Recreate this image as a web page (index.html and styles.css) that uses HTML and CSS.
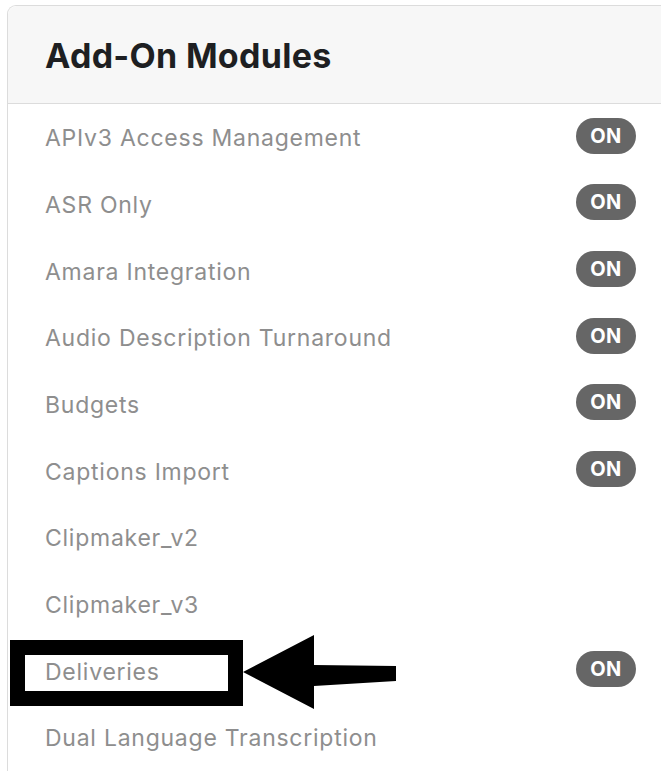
FILE: index.html
```html
<!DOCTYPE html>
<html>
<head>
    <meta charset="utf-8">
    <title>Add-On Modules</title>
    <link rel="stylesheet" href="styles.css">
</head>
<body>
    <div class="card">
        <div class="card-head"><h2>Add-On Modules</h2></div>
        <ul class="modules">
            <li><span>APIv3 Access Management</span><span class="badge">ON</span></li>
            <li><span>ASR Only</span><span class="badge">ON</span></li>
            <li><span>Amara Integration</span><span class="badge">ON</span></li>
            <li><span>Audio Description Turnaround</span><span class="badge">ON</span></li>
            <li><span>Budgets</span><span class="badge">ON</span></li>
            <li><span>Captions Import</span><span class="badge">ON</span></li>
            <li><span>Clipmaker_v2</span></li>
            <li><span>Clipmaker_v3</span></li>
            <li><span>Deliveries</span><span class="badge">ON</span></li>
            <li><span>Dual Language Transcription</span></li>
        </ul>
    </div>
    <div class="mark-box"></div>
    <svg class="mark-arrow" width="160" height="80" viewBox="0 0 160 80">
        <polygon points="0,37 71,0 71,30 153,31 153,46 71,51 71,74" fill="#000"/>
    </svg>
</body>
</html>
```

FILE: styles.css
```css
* { box-sizing: border-box; }
html, body { margin: 0; padding: 0; background: #fff; }
body { font-family: Inter, "Liberation Sans", sans-serif; overflow: hidden; }
.card { margin: 5px 0 0 7px; border: 1px solid #dcdcdc; border-right: none; border-bottom: none; border-radius: 9px 0 0 0; }
.card-head { height: 98px; background: #f7f7f7; border-bottom: 1px solid #dcdcdc; border-radius: 9px 0 0 0; display: flex; align-items: center; padding-left: 37px; }
.card-head h2 { margin: 0; font-size: 34px; font-weight: 700; color: #1e1f22; letter-spacing: 0.3px; padding-top: 2px; }
.modules { list-style: none; margin: 0; padding: 0; }
.modules li { height: 66.67px; display: flex; align-items: center; justify-content: space-between; padding: 0 25px 0 37px; font-size: 23px; letter-spacing: 0.75px; color: #8e8e8e; }
.modules li span:first-child { padding-top: 2px; }
.badge { width: 60px; height: 36px; border-radius: 18px; background: #666; color: #fff; font-size: 20px; font-weight: 700; letter-spacing: 0.5px; display: flex; align-items: center; justify-content: center; margin-top: -3px; }
.mark-box { position: absolute; left: 10px; top: 640px; width: 233px; height: 66px; border: 15px solid #000; }
.mark-arrow { position: absolute; left: 243px; top: 635px; }
```
